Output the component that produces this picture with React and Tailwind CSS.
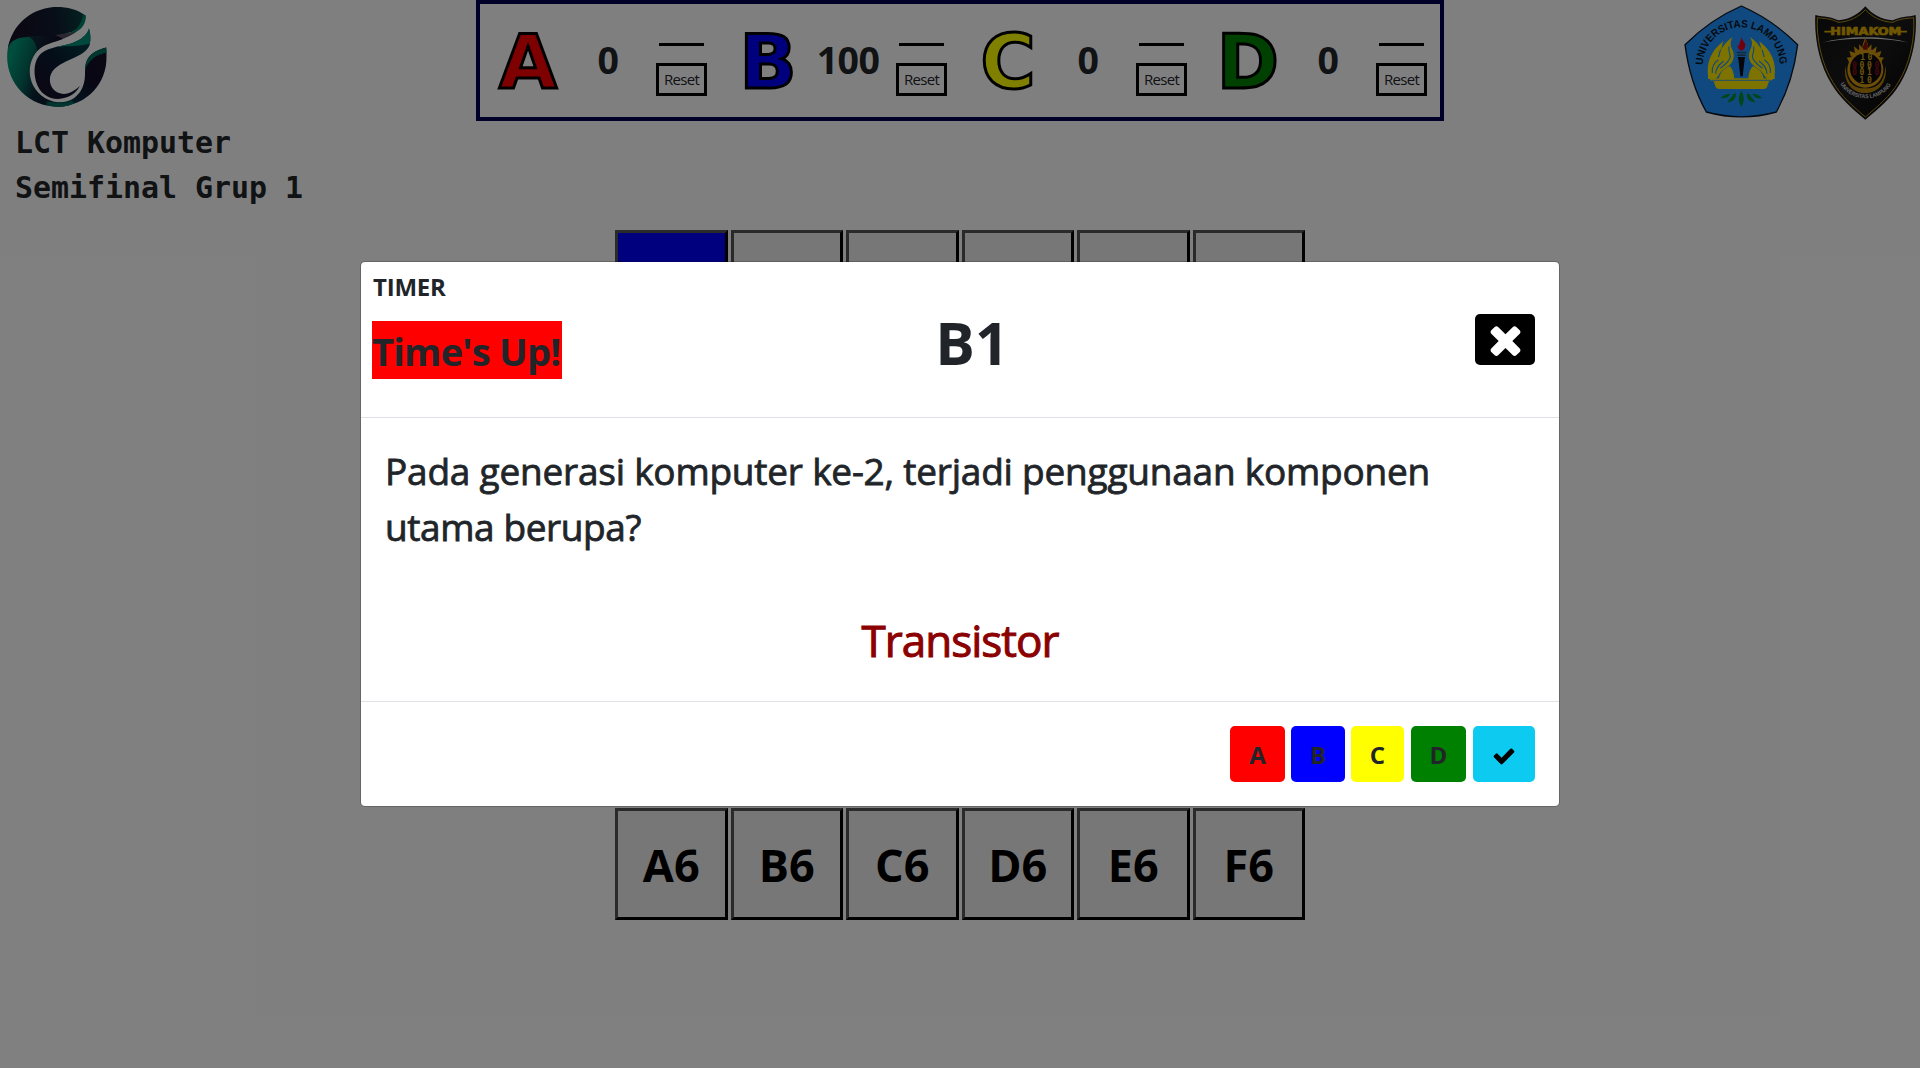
import React from "react";

const teams = [
  { name: "A", score: 0, color: "text-[#ff0000]" },
  { name: "B", score: 100, color: "text-[#0000ff]" },
  { name: "C", score: 0, color: "text-[#ffff00]" },
  { name: "D", score: 0, color: "text-[#008000]" },
];

const awardButtons = [
  { name: "A", style: "bg-[#ff0000] w-[55px]" },
  { name: "B", style: "bg-[#0000ff] w-[54px] ml-1.5" },
  { name: "C", style: "bg-[#ffff00] w-[53px] ml-1.5" },
  { name: "D", style: "bg-[#008000] w-[55px] ml-[7px]" },
];

const columns = ["A", "B", "C", "D", "E", "F"];
const rows = [1, 2, 3, 4, 5, 6];

function EventLogo() {
  return (
    <svg className="block h-[100px] w-[100px]" viewBox="21 20 301 302">
      <defs>
        <linearGradient id="ev-top" x1="60" y1="90" x2="258" y2="50" gradientUnits="userSpaceOnUse">
          <stop offset="0" stopColor="#161126" />
          <stop offset="0.55" stopColor="#101c30" />
          <stop offset="1" stopColor="#08443f" />
        </linearGradient>
        <linearGradient id="ev-left" x1="25" y1="190" x2="145" y2="230" gradientUnits="userSpaceOnUse">
          <stop offset="0" stopColor="#009b7c" />
          <stop offset="0.45" stopColor="#03695c" />
          <stop offset="0.8" stopColor="#0a2636" />
          <stop offset="1" stopColor="#0c1c30" />
        </linearGradient>
        <linearGradient id="ev-in" x1="265" y1="130" x2="120" y2="260" gradientUnits="userSpaceOnUse">
          <stop offset="0" stopColor="#053c47" />
          <stop offset="0.5" stopColor="#081d33" />
          <stop offset="1" stopColor="#151129" />
        </linearGradient>
        <linearGradient id="ev-right" x1="320" y1="170" x2="180" y2="315" gradientUnits="userSpaceOnUse">
          <stop offset="0" stopColor="#161027" />
          <stop offset="0.45" stopColor="#120f29" />
          <stop offset="0.8" stopColor="#062a40" />
          <stop offset="1" stopColor="#00665c" />
        </linearGradient>
      </defs>
      <path d="M46 92C30 115 21 140 21 170A150 150 0 0 0 171 321C190 321 200 319 212 315L190 308C155 310 118 292 99 256C82 222 88 180 112 153C132 130 165 128 190 116L150 98Z" fill="url(#ev-left)" />
      <path d="M258 46C232 27 203 20 171 20C118 20 68 48 40 96C30 115 24 132 23 146C30 122 50 112 85 110C125 107 165 106 190 102C225 96 258 80 258 46Z" fill="url(#ev-top)" />
      <path d="M85 110C120 107 150 106 190 102C215 98 232 90 240 82C230 100 210 108 190 116C165 127 135 128 112 153C108 130 100 115 85 110Z" fill="#16122a" opacity=".75" />
      <path d="M258 46C259 62 255 74 243 86C232 96 220 99 208 99C232 90 247 70 250 42Z" fill="#007f68" />
      <path d="M320 142C298 147 275 158 264 177C255 192 257 208 256 225C255 268 232 304 182 308C165 309 150 307 138 302C150 312 165 318 178 321C262 316 322 252 321 170C321 160 321 151 320 142Z" fill="url(#ev-right)" />
      <path d="M320 142C298 147 275 158 264 177C258 188 257 198 257 208C268 178 292 163 321 158Z" fill="#00705f" />
      <path d="M140 306C165 314 190 314 214 304L225 310C205 322 165 325 140 317Z" fill="#007462" opacity=".8" />
      <path d="M268 85C262 105 245 118 222 127C190 140 150 138 124 160C102 180 100 215 108 245C118 280 145 298 175 298C205 296 228 283 241 258C226 272 210 282 192 283C168 282 150 264 150 240C150 212 172 198 200 184C232 170 262 158 270 135C274 118 273 100 268 85Z" fill="url(#ev-in)" />
      <path d="M268 85C262 105 245 118 222 127C205 134 185 136 168 141C200 136 240 140 271 130C274 115 272 100 268 85Z" fill="#009076" />
    </svg>
  );
}

function UnilaLogo() {
  const wing = (
    <>
      <path d="M113 228C108 190 122 152 160 124C154 136 156 142 152 150C160 136 172 122 187 112C178 126 180 138 186 150C194 166 190 184 178 196C166 206 152 212 144 228L136 238L113 238Z" />
      <path d="M144 180C130 190 124 204 126 220M160 184C144 196 136 206 136 222M176 140C174 154 178 160 180 170C180 182 166 194 150 206M151 150C146 160 148 166 144 172" fill="none" stroke="#1f93ff" strokeWidth="3.5" />
    </>
  );
  return (
    <svg className="block h-[114px] w-[115px]" viewBox="41 16 345 342">
      <path d="M213 19C273 45 335 88 382 135C373 205 350 280 318 337C250 356 178 356 108 337C76 280 53 205 44 135C91 88 153 45 213 19Z" fill="#1f93ff" stroke="#0a1420" strokeWidth="4" />
      <path id="unila-arc" d="M98 196A115 113 0 0 1 328 196" fill="none" />
      <text className="font-['Liberation_Sans'] font-bold" fontSize="32" fill="#0a1420">
        <textPath href="#unila-arc" textLength="356" lengthAdjust="spacingAndGlyphs">UNIVERSITAS LAMPUNG</textPath>
      </text>
      <g fill="#ffe600">
        <g>{wing}</g>
        <g transform="translate(426 0) scale(-1 1)">{wing}</g>
        <path d="M120 228C124 238 136 236 150 236H276C290 236 302 238 306 228C312 236 306 243 296 245L290 262Q288 268 280 268H146Q138 268 136 262L130 245C120 243 114 236 120 228Z" />
        <path d="M178 200C186 206 190 218 192 238H146C148 218 162 206 178 200ZM248 200C240 206 236 218 234 238H280C278 218 264 206 248 200Z" />
      </g>
      <path d="M124 242H302" stroke="#1f93ff" strokeWidth="2.5" />
      <path d="M199 156H228V161H199ZM201 164H226V169H201Z" fill="#24576e" />
      <path d="M202 172H225L223 178L217 230H210L204 178Z" fill="#0a0a18" />
      <path d="M214 112C215 124 225 126 225 137C225 146 219 152 213 153C206 151 201 145 202 136L207 138C206 128 213 122 214 112Z" fill="#e8001c" />
      <g fill="#008c2c">
        <path d="M213 274C222 288 223 306 213 321C203 306 204 288 213 274Z" />
        <path d="M196 281C199 296 190 306 172 308C174 298 184 296 188 284ZM230 281C227 296 236 306 254 308C252 298 242 296 238 284Z" />
        <path d="M180 282C174 294 164 298 150 295C158 290 162 283 180 282ZM246 282C252 294 262 298 276 295C268 290 264 283 246 282Z" />
      </g>
    </svg>
  );
}

function HimakomLogo() {
  return (
    <svg className="block h-[116px] w-[103px]" viewBox="432 12 309 348">
      <defs>
        <linearGradient id="hm-bg" x1="0" x2="1" y1="0" y2="1">
          <stop offset="0" stopColor="#101010" />
          <stop offset="0.5" stopColor="#1b1b1b" />
          <stop offset="1" stopColor="#020202" />
        </linearGradient>
      </defs>
      <path d="M436 42C462 48 484 47 505 58C536 56 566 40 586 16C606 40 636 56 668 58C690 47 712 48 737 42C742 110 726 190 690 248C664 292 626 322 586 356C546 322 510 292 484 248C448 190 432 110 436 42Z" fill="url(#hm-bg)" />
      <path d="M442 50C465 53 486 53 504 64C536 63 566 48 586 26C606 48 636 63 669 64C688 53 708 53 731 50C735 112 720 188 685 244C660 286 624 315 586 348C548 315 514 286 489 244C454 188 439 112 442 50Z" fill="none" stroke="#b8921c" strokeWidth="3" />
      <path d="M456 125C530 103 642 103 718 125C642 109 530 109 456 125Z" fill="#d8d8d8" />
      <path d="M463 92H484M688 92H711" stroke="#e0b000" strokeWidth="5" />
      <text className="font-['DejaVu_Sans'] font-bold" x="481" y="103" fontSize="30" textLength="213" lengthAdjust="spacingAndGlyphs" fill="#e0b000" stroke="#e0b000" strokeWidth="2">HIMAKOM</text>
      <path d="M586 108C588 120 596 128 594 142L604 130C606 140 602 144 606 148L620 136C618 146 620 150 616 156L634 150C630 160 632 164 626 168L642 170C634 178 634 186 632 194H540C538 186 536 178 530 170L546 168C540 164 542 160 538 150L556 156C552 150 554 146 552 136L566 148C570 144 566 140 568 130L578 142C576 128 584 120 586 108Z" fill="#d99a10" />
      <path d="M587 112C588 124 597 132 592 146H580C576 134 586 126 587 112Z" fill="#8b0f0a" />
      <circle cx="586" cy="206" r="54" fill="#d99a10" />
      <path d="M527 194C528 250 556 262 586 262C616 262 644 250 646 194C654 236 630 276 586 276C542 276 518 236 527 194Z" fill="#b8860b" />
      <circle cx="587" cy="203" r="47" fill="#0b0b0b" />
      <g className="font-['DejaVu_Sans_Mono'] font-bold" fontSize="24" textAnchor="middle" fill="#d8a81c">
        <text x="578" y="178">1</text><text x="600" y="178">0</text>
        <text x="553" y="200" fill="#8e0f1c">0</text><text x="576" y="200">0</text><text x="598" y="200">0</text><text x="621" y="200" fill="#8e0f1c">0</text>
        <text x="553" y="223" fill="#8e0f1c">0</text><text x="576" y="223">0</text><text x="598" y="223">1</text><text x="621" y="223" fill="#8e0f1c">0</text>
        <text x="576" y="246">1</text><text x="598" y="246">0</text>
      </g>
      <path id="hm-arc" d="M511 248C538 306 636 306 664 248" fill="none" />
      <text className="font-['Liberation_Sans'] font-bold" fontSize="17" fill="#d0d0d0">
        <textPath href="#hm-arc" textLength="182" lengthAdjust="spacingAndGlyphs">UNIVERSITAS LAMPUNG</textPath>
      </text>
    </svg>
  );
}

function TimesIcon() {
  return (
    <svg className="h-[45px] w-[45px] shrink-0" viewBox="0 0 1792 1792" fill="currentColor">
      <path d="M1490 1322q0 40-28 68l-136 136q-28 28-68 28t-68-28l-294-294-294 294q-28 28-68 28t-68-28l-136-136q-28-28-28-68t28-68l294-294-294-294q-28-28-28-68t28-68l136-136q28-28 68-28t68 28l294 294 294-294q28-28 68-28t68 28l136 136q28 28 28 68t-28 68l-294 294 294 294q28 28 28 68z" />
    </svg>
  );
}

function CheckIcon() {
  return (
    <svg className="h-6 w-6 shrink-0" viewBox="0 0 1792 1792" fill="currentColor">
      <path d="M1671 566q0 40-28 68l-724 724-136 136q-28 28-68 28t-68-28l-136-136-362-362q-28-28-28-68t28-68l136-136q28-28 68-28t68 28l294 295 656-657q28-28 68-28t68 28l136 136q28 28 28 68z" />
    </svg>
  );
}

function TeamScore({ team }) {
  return (
    <div className="flex w-60">
      <div className={`flex w-24 items-center justify-center pt-[3px] font-['DejaVu_Sans'] text-[75px] leading-none font-bold [-webkit-text-stroke:3px_#000] ${team.color}`}>
        {team.name}
      </div>
      <div className="flex w-16 items-center justify-center pb-px text-[37.5px] font-bold tracking-[-0.6px]">
        {team.score}
      </div>
      <div className="flex flex-col items-start pt-[39px] pl-4">
        <div className="ml-[3px] h-[3px] w-[45px] bg-black" />
        <button className="mt-[17px] flex h-[33px] w-[51px] items-center justify-center border-[3px] border-black text-[15px] tracking-[-0.7px]">
          Reset
        </button>
      </div>
    </div>
  );
}

export default function App() {
  return (
    <div className="relative h-[1068px] w-[1920px] overflow-hidden bg-white font-['Open_Sans',sans-serif] text-[#212529]">
      <header className="flex h-[230px] items-start">
        <div className="w-[476px] pt-[7px]">
          <div className="ml-[7px]">
            <EventLogo />
          </div>
          <div className="mt-[13px] ml-[15px] font-['DejaVu_Sans_Mono',monospace] text-[29.9px] leading-[45px] font-bold">
            <p>LCT Komputer</p>
            <p>Semifinal Grup 1</p>
          </div>
        </div>
        <div className="flex h-[121px] w-[968px] border-4 border-[#000050]">
          {teams.map((team) => (
            <TeamScore key={team.name} team={team} />
          ))}
        </div>
        <div className="flex flex-1 items-start justify-end gap-[15px] pt-[5px] pr-[3px]">
          <UnilaLogo />
          <HimakomLogo />
        </div>
      </header>

      <main className="mx-auto grid w-[690px] grid-cols-6 gap-[3px]">
        {rows.map((row) => {
          // The dialog covers the labels of every row except the last one.
          const label = row === rows.length;
          return columns.map((col) => (
            <div
              key={col + row}
              className={`flex h-[112.5px] items-center justify-center border-3 border-black pt-0.5 text-[45px] font-bold text-black [border-style:outset] ${
                col === "A" && row === 1 ? "bg-[#0000ff]" : "bg-[#efefef]"
              }`}
            >
              {label && col + row}
            </div>
          ));
        })}
      </main>

      <div className="absolute inset-0 bg-black/50 pt-[261px]">
        <section className="mx-auto flex h-[546px] w-[1200px] flex-col rounded-[5px] border border-black/20 bg-white bg-clip-padding">
          <div className="flex h-[156px] items-start border-b border-[#dee2e6]">
            <div className="w-[400px] pt-[7px] pl-[11px]">
              <h6 className="pl-px text-2xl leading-9 font-bold tracking-[-0.2px]">TIMER</h6>
              <div className="mt-4 h-[58px] w-[190px] bg-[#ff0000] text-[38px] leading-[60px] font-bold tracking-[-0.75px] whitespace-nowrap">
                Time's Up!
              </div>
            </div>
            <h1 className="w-[422px] pt-[50px] text-center text-[59px] leading-[60px] font-bold">B1</h1>
            <div className="flex flex-1 justify-end pt-[52px] pr-6">
              <button className="flex h-[51px] w-[60px] items-center justify-center rounded-[5px] bg-black pb-px text-white">
                <TimesIcon />
              </button>
            </div>
          </div>
          <div className="h-[283px] px-6 pt-[25px]">
            <p className="text-[37px] leading-14 tracking-[-0.22px] [-webkit-text-stroke:0.8px_#212529]">
              Pada generasi komputer ke-2, terjadi penggunaan komponen{" "}
              <span className="tracking-[-0.4px]">utama berupa?</span>
            </p>
            <p className="mt-[52px] text-center text-[44px] leading-[66px] tracking-[-1px] text-[#8b0000] [-webkit-text-stroke:1px_#8b0000]">
              Transistor
            </p>
          </div>
          <div className="flex flex-1 items-start justify-end border-t border-[#dee2e6] pt-6 pr-6 text-2xl font-bold">
            {awardButtons.map((button) => (
              <button key={button.name} className={`h-14 rounded-[5px] pt-0.5 ${button.style}`}>
                {button.name}
              </button>
            ))}
            <button className="ml-[7px] flex h-14 w-[62px] items-center justify-center rounded-[5px] bg-[#0dcaf0] pt-1 text-black">
              <CheckIcon />
            </button>
          </div>
        </section>
      </div>
    </div>
  );
}
